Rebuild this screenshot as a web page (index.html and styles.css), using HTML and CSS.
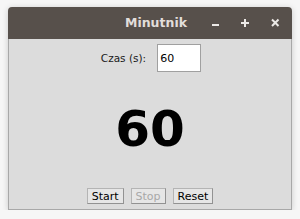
FILE: index.html
```html
<!DOCTYPE html>
<html lang="pl">
<head>
    <meta charset="UTF-8">
    <title>Minutnik</title>
    <link rel="stylesheet" href="styles.css">
</head>
<body>
    <div class="window">
        <div class="titlebar">
            <span class="title">Minutnik</span>
            <div class="controls">
                <svg class="ctl" width="30" height="32" viewBox="0 0 30 32">
                    <path d="M11 18h7" stroke="#ece9e6" stroke-width="2"/>
                </svg>
                <svg class="ctl" width="30" height="32" viewBox="0 0 30 32">
                    <path d="M10 16h8M14 12v8" stroke="#ece9e6" stroke-width="2"/>
                </svg>
                <svg class="ctl" width="30" height="32" viewBox="0 0 30 32">
                    <path d="M11 12.5l6.5 6.5M17.5 12.5l-6.5 6.5" stroke="#ece9e6" stroke-width="2"/>
                </svg>
            </div>
        </div>
        <div class="content">
            <div class="input-row">
                <label for="secs">Czas (s):</label>
                <input id="secs" class="entry" type="text" value="60">
            </div>
            <div class="display">60</div>
            <div class="buttons">
                <button class="btn">Start</button>
                <button class="btn" disabled>Stop</button>
                <button class="btn">Reset</button>
            </div>
        </div>
    </div>
</body>
</html>
```

FILE: styles.css
```css
* {
    margin: 0;
    padding: 0;
    box-sizing: border-box;
}

body {
    background: #f6f6f6;
    font-family: "DejaVu Sans", sans-serif;
    padding: 7px 8px 0 8px;
}

.window {
    width: 284px;
    height: 203px;
    display: flex;
    flex-direction: column;
    box-shadow: 0 1px 6px rgba(0, 0, 0, 0.18);
    border-radius: 4px 4px 0 0;
}

.titlebar {
    height: 32px;
    background: #57504b;
    border-radius: 4px 4px 0 0;
    position: relative;
    display: flex;
    align-items: center;
    justify-content: center;
}

.title {
    color: #e2deda;
    font-weight: bold;
    font-size: 12.5px;
    margin-top: -1px;
    margin-left: 12px;
}

.controls {
    position: absolute;
    right: 0;
    top: 0;
    height: 32px;
    display: flex;
    padding-right: 1px;
}

.ctl {
    display: block;
}

.content {
    flex: 1;
    background: #dcdcdc;
    border: 1px solid #a8a8a8;
    border-top: none;
    display: flex;
    flex-direction: column;
    align-items: center;
    padding-top: 5px;
    padding-bottom: 5px;
}

.input-row {
    display: flex;
    align-items: center;
    gap: 11px;
    margin-left: 2px;
}

.input-row label {
    font-size: 10.5px;
    color: #1a1a1a;
}

.entry {
    width: 44px;
    height: 28px;
    background: #fff;
    border: 1px solid #a0a0a0;
    font-family: "DejaVu Sans", sans-serif;
    font-size: 11px;
    padding-left: 2px;
    color: #000;
    outline: none;
}

.display {
    flex: 1;
    display: flex;
    align-items: center;
    justify-content: center;
    font-size: 50px;
    font-weight: bold;
    color: #000;
    padding-bottom: 2px;
}

.buttons {
    display: flex;
    gap: 7px;
}

.btn {
    height: 16px;
    padding: 0 4px;
    background: #e6e6e6;
    border: 1px solid #b4b4b4;
    border-right-color: #929292;
    border-bottom-color: #929292;
    font-family: "DejaVu Sans", sans-serif;
    font-size: 11px;
    color: #000;
}

.btn:disabled {
    color: #a8a8a8;
}
```
